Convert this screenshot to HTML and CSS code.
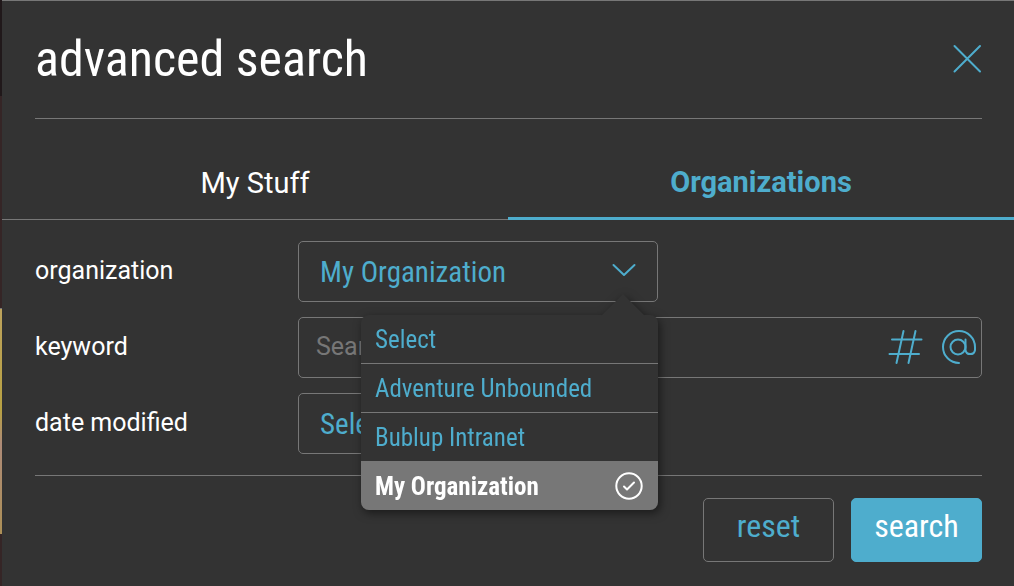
FILE: index.html
```
<!DOCTYPE html>
<html lang="en">
<head>
    <meta charset="UTF-8">
    <meta name="viewport" content="width=device-width, initial-scale=1.0">
    <title>Advanced Search</title>
    <link rel="stylesheet" href="styles.css">
</head>
<body>

<div class="page-behind">
    <div class="card-behind"></div>
</div>

<main class="panel">
    <header class="panel-header">
        <h1>advanced search</h1>
        <button type="button" class="close-btn" aria-label="Close">
            <svg width="30" height="30" viewBox="0 0 30 30"><path d="M2.500 2L28 27.500M28 2L2.500 27.500"/></svg>
        </button>
    </header>

    <div class="tabs" role="tablist">
        <button type="button" class="tab" role="tab" aria-selected="false">My Stuff</button>
        <button type="button" class="tab active" role="tab" aria-selected="true">Organizations</button>
    </div>

    <form class="search-form">
        <div class="fields">
            <label for="organization">organization</label>
            <div class="select-box">
                <select id="organization" name="organization">
                    <option>Select</option>
                    <option>Adventure Unbounded</option>
                    <option>Bublup Intranet</option>
                    <option selected>My Organization</option>
                </select>
                <svg class="chevron" width="24" height="14" viewBox="0 0 24 14"><path d="M1.500 2L12 12L22.500 2"/></svg>

                <!-- Open organization menu -->
                <div class="menu" role="listbox" aria-label="organization">
                    <button type="button" class="menu-item" role="option">Select</button>
                    <button type="button" class="menu-item" role="option">Adventure Unbounded</button>
                    <button type="button" class="menu-item" role="option">Bublup Intranet</button>
                    <button type="button" class="menu-item selected" role="option" aria-selected="true">
                        My Organization
                        <svg width="28" height="28" viewBox="0 0 28 28"><circle cx="14" cy="14" r="12.700"/><path d="M9 14.500L12 17.500L19 10.500"/></svg>
                    </button>
                </div>
            </div>

            <label for="keyword">keyword</label>
            <div class="keyword-box">
                <input type="text" id="keyword" name="keyword" placeholder="Search">
                <button type="button" class="icon-btn" aria-label="Tags">
                    <svg width="36" height="36" viewBox="0 0 36 36"><path d="M16.500 2L9.500 34M28.500 2L21.500 34M5 10.500H34.500M2.500 25H32"/></svg>
                </button>
                <button type="button" class="icon-btn" aria-label="Mentions">
                    <svg width="36" height="36" viewBox="0 0 36 36"><circle cx="17" cy="18" r="7.500"/><path d="M24.500 10.500V21a4.800 4.800 0 0 0 9.500 0V18A16 16 0 1 0 18 34"/></svg>
                </button>
            </div>

            <label for="date">date modified</label>
            <div class="select-box">
                <select id="date" name="date">
                    <option>Select</option>
                </select>
                <svg class="chevron" width="24" height="14" viewBox="0 0 24 14"><path d="M1.500 2L12 12L22.500 2"/></svg>
            </div>
        </div>

        <div class="actions">
            <button type="reset" class="btn">reset</button>
            <button type="submit" class="btn primary">search</button>
        </div>
    </form>
</main>

</body>
</html>
```
FILE: styles.css
```
* {
    box-sizing: border-box;
}
body {
    margin: 0;
    display: flex;
    min-height: 100vh;
    background-color: #333;
    color: #fff;
    font-family: Roboto, sans-serif;
    font-size: 25px;
}
button, select, input {
    font: inherit;
    margin: 0;
}
button {
    padding: 0;
    border: none;
    background: none;
    cursor: pointer;
}
svg {
    display: block;
    flex: none;
    fill: none;
    stroke: #4eadcd;
    stroke-width: 2;
    stroke-linecap: round;
    stroke-linejoin: round;
}

/* sliver of the page behind the panel */
.page-behind {
    width: 2px;
    padding: 308px 0 52px;
    display: flex;
    background: linear-gradient(#20181a 96px, #352526 96px);
}
.card-behind {
    flex: 1;
    border-top: 1px solid #777;
    background: linear-gradient(#bda35c, #b8a143 45%, #ae8b78 60%, #ad9057);
}

.panel {
    flex: 1;
    border-top: 1px solid #777;
}
.panel-header {
    display: flex;
    align-items: center;
    justify-content: space-between;
    height: 118px;
    margin: 0 32px 0 33px;
    padding-bottom: 2px;
    border-bottom: 1px solid #777;
}
h1 {
    margin: 0;
    font-family: "Roboto Condensed", Roboto, sans-serif;
    font-size: 50px;
    font-weight: 400;
    line-height: 60px;
}

.tabs {
    display: flex;
}
.tab {
    flex: 1;
    height: 101px;
    padding-top: 28px;
    border-bottom: 1px solid #777;
    color: #fff;
    font-size: 29px;
}
.tab.active {
    border-bottom: 3px solid #4eadcd;
    color: #4eadcd;
    font-weight: 700;
}

.search-form {
    padding: 21px 32px 24px 33px;
}
.fields {
    display: grid;
    grid-template-columns: 263px 1fr;
    row-gap: 15px;
    align-items: center;
    padding-bottom: 21px;
    border-bottom: 1px solid #777;
}
.fields label {
    padding-bottom: 2px;
}
.select-box {
    position: relative;
    width: 360px;
}
.select-box select {
    display: block;
    width: 100%;
    height: 61px;
    padding: 0 60px 0 21px;
    border: 1px solid #777;
    border-radius: 5px;
    background-color: #333;
    color: #4eadcd;
    font-family: "Roboto Condensed", Roboto, sans-serif;
    font-size: 29px;
    appearance: none;
}
.chevron {
    position: absolute;
    top: 22px;
    right: 22px;
    pointer-events: none;
}
.keyword-box {
    display: flex;
    align-items: center;
    gap: 18px;
    height: 61px;
    padding: 0 4px 2px 0;
    border: 1px solid #777;
    border-radius: 5px;
}
.keyword-box input {
    flex: 1;
    min-width: 0;
    height: 100%;
    padding: 0 17px;
    border: none;
    background: none;
    color: #fff;
    outline: none;
}
.keyword-box input::placeholder {
    color: #777;
}

.menu {
    position: absolute;
    top: 74px;
    right: 0;
    z-index: 1;
    width: 297px;
    border-radius: 8px;
    background-color: #333;
    filter: drop-shadow(2px 3px 5px rgba(0, 0, 0, 0.5));
}
.menu::before {
    content: "";
    position: absolute;
    top: -21px;
    right: 13px;
    border: 22px solid transparent;
    border-top: none;
    border-bottom-color: #333;
}
.menu-item {
    display: flex;
    align-items: center;
    justify-content: space-between;
    width: 100%;
    height: 49px;
    padding: 0 15px 0 14px;
    border-bottom: 1px solid #777;
    color: #4eadcd;
    font-family: "Roboto Condensed", Roboto, sans-serif;
    font-size: 25px;
}
.menu-item.selected {
    height: 48px;
    border-bottom: none;
    border-radius: 0 0 8px 8px;
    background-color: #777;
    color: #fff;
    font-weight: 700;
}
.menu-item svg {
    stroke: #fff;
}

.actions {
    display: flex;
    justify-content: flex-end;
    gap: 17px;
    padding-top: 22px;
}
.btn {
    width: 131px;
    height: 64px;
    padding-bottom: 8px;
    border: 1px solid #777;
    border-radius: 5px;
    color: #4eadcd;
    font-family: "Roboto Condensed", Roboto, sans-serif;
    font-size: 32px;
}
.btn.primary {
    border-color: #4eadcd;
    background-color: #4eadcd;
    color: #fff;
}
```
